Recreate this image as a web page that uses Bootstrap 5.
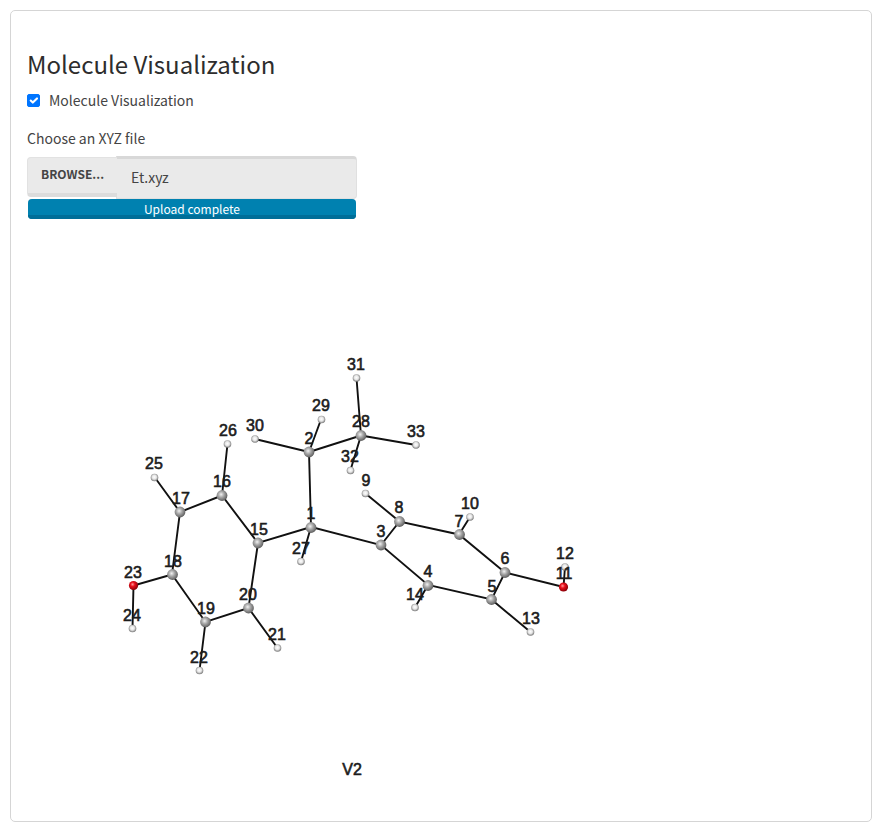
<!DOCTYPE html>
<html lang="en">
<head>
<meta charset="utf-8">
<meta name="viewport" content="width=device-width, initial-scale=1">
<title>Molecule Visualization</title>
<link href="https://cdn.jsdelivr.net/npm/bootstrap@5.3.0/dist/css/bootstrap.min.css" rel="stylesheet">
<style>
  body { font-family: "Noto Sans CJK SC", "Open Sans", sans-serif; font-size: 14px; line-height: 20px; color: #444; background: #fff; padding: 10px 11px 10px 10px; }
  .panel { border: 1px solid #d5d5d5; border-radius: 5px; padding: 37px 16px 16px; }
  .panel h1 { font-size: 24px; line-height: 32px; font-weight: 400; color: #2d2d2d; margin-bottom: 10px; }
  .toggle { gap: 9px; margin-bottom: 18px; }
  .toggle .form-check-input { width: 13px; height: 13px; margin: 0; border-radius: 2px; }
  .toggle .form-check-input:checked { background-color: #0075ff; border-color: #0075ff; background-size: 14px 14px; }
  .upload { max-width: 330px; }
  .upload label { margin-bottom: 8px; }
  .upload .btn { font-size: 12px; line-height: 16px; font-weight: 700; color: #444; background: #eaeaea; border: 1px solid #e2e2e2; border-bottom: 4px solid #dcdcdc; border-right: 0; border-radius: 4px 0 0 4px; padding: 8px 13px 11px; margin: 1px 0 2px; text-transform: uppercase; }
  .upload .form-control { font-size: 14px; line-height: 20px; color: #444; background: #eaeaea; border: 1px solid #e0e0e0; border-top: 3px solid #d8d8d8; border-radius: 0 4px 4px 0; padding: 8px 14px 11px; }
  .upload .progress { height: 20px; border-radius: 4px; background: #e0e0e0; margin: 0 1px; }
  .upload .progress-bar { font-size: 12px; line-height: 20px; font-weight: 400; background: #0081b0; box-shadow: inset 0 -4px #006e98; }
  .molecule { width: 100%; height: auto; }
  .molecule text { font: 16px "Liberation Sans", Arial, sans-serif; text-anchor: middle; fill: #1c1c1c; stroke: #1c1c1c; stroke-width: .6; }
  .bonds { stroke: #111; stroke-width: 1.9; fill: none; stroke-linecap: round; }
</style>
</head>
<body>
<main class="panel">
  <h1>Molecule Visualization</h1>
  <div class="toggle d-flex align-items-center">
    <input class="form-check-input" type="checkbox" id="show" checked>
    <label for="show">Molecule Visualization</label>
  </div>
  <div class="upload">
    <label class="d-block" for="filename">Choose an XYZ file</label>
    <div class="input-group">
      <button class="btn" type="button">Browse...</button>
      <input class="form-control" type="text" id="filename" value="Et.xyz" readonly>
    </div>
    <div class="progress" role="progressbar" aria-label="Upload" aria-valuenow="100" aria-valuemin="0" aria-valuemax="100">
      <div class="progress-bar w-100">Upload complete</div>
    </div>
  </div>
  <svg class="molecule d-block" viewBox="27 219 828 586" role="img" aria-label="Numbered molecule model">
    <defs>
      <radialGradient id="gc" cx=".42" cy=".4" r=".6"><stop offset="0" stop-color="#f2f2f2"/><stop offset=".45" stop-color="#a8a8a8"/><stop offset="1" stop-color="#606060"/></radialGradient>
      <radialGradient id="gh" cx=".48" cy=".45" r=".55"><stop offset="0" stop-color="#fff"/><stop offset=".5" stop-color="#e6e6e6"/><stop offset="1" stop-color="#747474"/></radialGradient>
      <radialGradient id="go" cx=".4" cy=".38" r=".6"><stop offset="0" stop-color="#ff9a9a"/><stop offset=".4" stop-color="#e8101c"/><stop offset="1" stop-color="#8c0008"/></radialGradient>
      <circle id="c" r="5.4" fill="url(#gc)"/>
      <circle id="h" r="3.8" fill="url(#gh)"/>
      <circle id="o" r="4.6" fill="url(#go)"/>
    </defs>
    <path class="bonds" d="M309 452L311 527L381 545L428 585L491.5 599.5L505 572.5L459 534.5L399.5 521.5L381 545M399.5 521.5L365.5 493.5M459 534.5L470 517M505 572.5L563.5 587L565 567M491.5 599.5L530.5 632M428 585L415 607.5M311 527L301 561.5M311 527L258 543L222 495.5L180 512L172 574.5L205.5 622L248.5 608L258 543M222 495.5L227.5 444M180 512L154.5 477M172 574.5L133.5 585.5L132.5 628.5M205.5 622L199.5 670.5M248.5 608L277.5 648M309 452L255 439M309 452L321 419.5M309 452L361 435.5L356.5 378M361 435.5L350.5 470M361 435.5L416 445"/>
    <g>
      <use href="#c" x="311" y="527.5"/><use href="#c" x="309" y="452"/><use href="#c" x="381" y="545"/><use href="#c" x="428" y="585.5"/><use href="#c" x="491.5" y="599.5"/><use href="#c" x="505" y="572.5"/><use href="#c" x="459.5" y="534.5"/><use href="#c" x="399.5" y="521.5"/>
      <use href="#c" x="258" y="543"/><use href="#c" x="222" y="495.5"/><use href="#c" x="180" y="512"/><use href="#c" x="172.5" y="574.5"/><use href="#c" x="205.5" y="622"/><use href="#c" x="248.5" y="608"/><use href="#c" x="361" y="435.5"/>
      <use href="#h" x="365.5" y="493.5"/><use href="#h" x="470" y="517"/><use href="#h" x="565" y="567"/><use href="#h" x="530.5" y="632"/><use href="#h" x="415" y="607.5"/><use href="#h" x="277.5" y="648"/><use href="#h" x="199.5" y="670.5"/><use href="#h" x="132.5" y="628.5"/><use href="#h" x="154.5" y="477.5"/><use href="#h" x="227.5" y="444"/><use href="#h" x="301" y="561.5"/><use href="#h" x="321.5" y="419.5"/><use href="#h" x="255" y="439"/><use href="#h" x="356.5" y="378"/><use href="#h" x="350.5" y="470.5"/><use href="#h" x="416" y="445"/>
      <use href="#o" x="563.5" y="587"/><use href="#o" x="133.5" y="585.5"/>
    </g>
    <g>
      <text x="311" y="519">1</text><text x="309" y="444">2</text><text x="381" y="537">3</text><text x="428" y="577">4</text><text x="492" y="592">5</text><text x="505" y="564">6</text><text x="459" y="527">7</text><text x="399" y="513">8</text><text x="366" y="486">9</text><text x="470" y="509">10</text><text x="564" y="579">11</text><text x="565" y="559">12</text><text x="531" y="624">13</text><text x="415" y="600">14</text><text x="259" y="535">15</text><text x="222" y="487">16</text><text x="181" y="504">17</text><text x="173" y="567">18</text><text x="206" y="614">19</text><text x="248" y="600">20</text><text x="277" y="640">21</text><text x="199" y="663">22</text><text x="133" y="578">23</text><text x="132" y="621">24</text><text x="154" y="469">25</text><text x="228" y="436">26</text><text x="301" y="554">27</text><text x="361" y="427">28</text><text x="321" y="411">29</text><text x="255" y="431">30</text><text x="356" y="370">31</text><text x="350" y="462">32</text><text x="416" y="437">33</text>
      <text x="352" y="775">V2</text>
    </g>
  </svg>
</main>
<script src="https://cdn.jsdelivr.net/npm/bootstrap@5.3.0/dist/js/bootstrap.bundle.min.js"></script>
</body>
</html>
